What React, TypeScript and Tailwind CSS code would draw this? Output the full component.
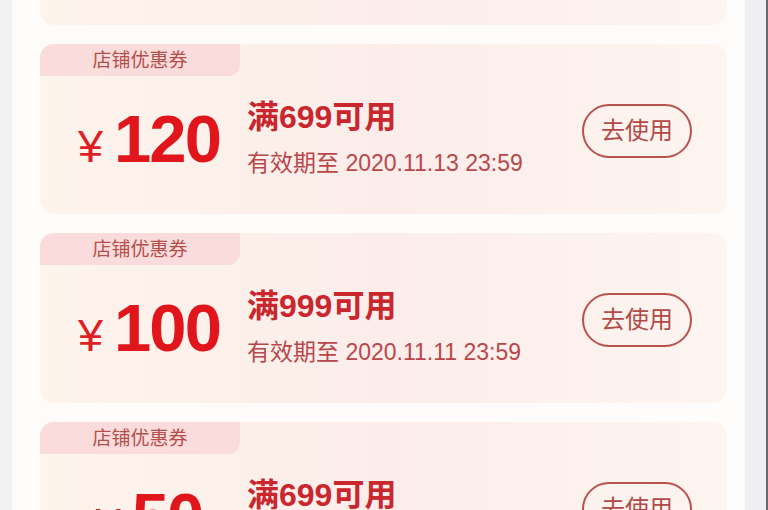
import React from "react";

type Coupon = { amount: string; limit: string; date: string };

const coupons: Coupon[] = [
  { amount: "200", limit: "满1299可用", date: "有效期至 2020.11.13 23:59" },
  { amount: "120", limit: "满699可用", date: "有效期至 2020.11.13 23:59" },
  { amount: "100", limit: "满999可用", date: "有效期至 2020.11.11 23:59" },
  { amount: "50", limit: "满699可用", date: "有效期至 2020.11.11 23:59" },
];

function Card({ c }: { c: Coupon }) {
  return (
    <div className="flex h-[170px] w-[687px] shrink-0 flex-col rounded-[14px] bg-gradient-to-r from-[#fdf4ec] via-[#fcedea] to-[#fdf5f0]">
      <div className="flex h-[32px] w-[200px] items-center justify-center rounded-tl-[14px] rounded-br-[12px] bg-[#fbdcdc] pt-[2px] text-[19px] text-[#b4504c]">
        店铺优惠券
      </div>
      <div className="flex flex-1 items-center pb-[14px] pl-[19px] pr-[35px]">
        <div className="flex w-[180px] items-baseline justify-center">
          <span className="text-[45px] leading-none text-[#df1f26]">¥</span>
          <span className="ml-[11px] text-[67px] font-bold leading-none tracking-[-2px] text-[#e1161d]">{c.amount}</span>
        </div>
        <div className="ml-[8px] flex flex-col">
          <div className="text-[32px] font-bold leading-[32px] text-[#c9262d]">{c.limit}</div>
          <div className="mt-[18px] text-[23px] leading-[24px] text-[#b9474a]">{c.date}</div>
        </div>
        <div className="mb-[14px] ml-auto flex h-[54px] w-[110px] items-center justify-center rounded-full border-2 border-[#b8524f] text-[24px] text-[#b24a48]">
          去使用
        </div>
      </div>
    </div>
  );
}

export default function App() {
  return (
    <div
      className="flex h-[510px] w-[768px] overflow-hidden bg-white"
      style={{ fontFamily: '"Liberation Sans", "Noto Sans CJK SC", sans-serif' }}
    >
      <div className="w-[12px] shrink-0 bg-[#f2f2f4]" />
      <div className="flex flex-1 flex-col gap-[19px] bg-[#fefcfb] pl-[28px] -mt-[145px]">
        {coupons.map((c, i) => (
          <Card key={i} c={c} />
        ))}
      </div>
      <div className="w-[21px] shrink-0 bg-[#efeff1]" />
      <div className="w-[2px] shrink-0 bg-[#6a6a6a]" />
    </div>
  );
}
